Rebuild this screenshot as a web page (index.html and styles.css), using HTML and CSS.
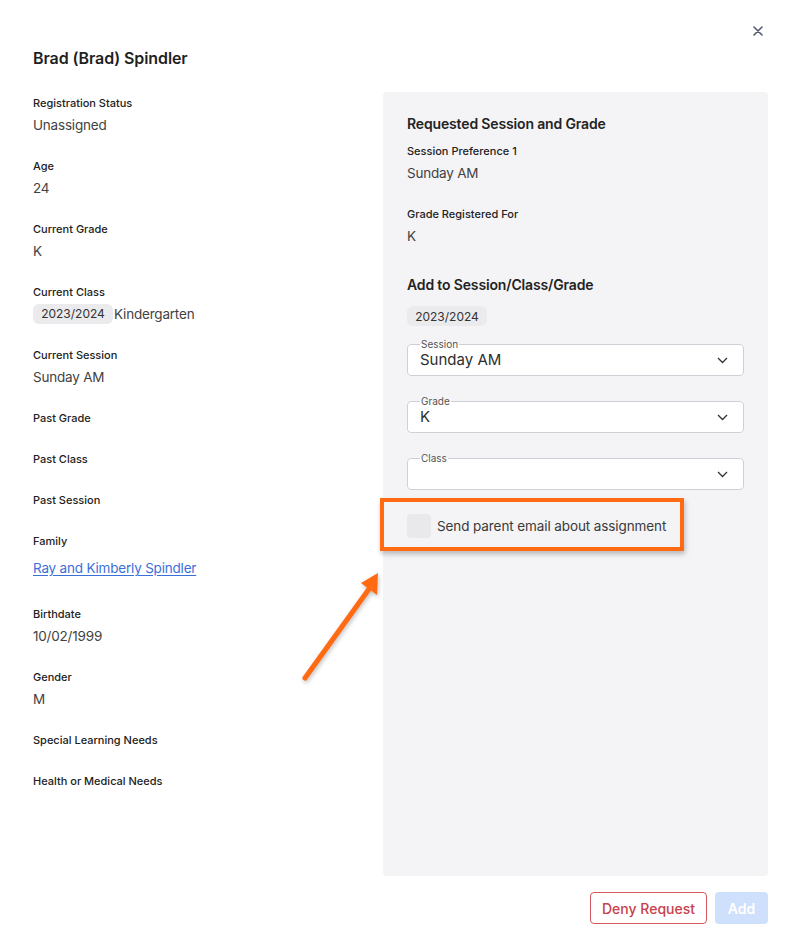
FILE: index.html
```html
<!DOCTYPE html>
<html lang="en">
<head>
    <meta charset="UTF-8">
    <meta name="viewport" content="width=device-width, initial-scale=1.0">
    <title>Brad (Brad) Spindler</title>
    <link rel="stylesheet" href="styles.css">
</head>
<body>
    <div class="modal">
        <div class="modal-header">
            <h1>Brad (Brad) Spindler</h1>
            <button class="close-btn" aria-label="Close">
                <svg width="10" height="10" viewBox="0 0 10 10"><path d="M1 1L9 9M9 1L1 9" stroke="#4f5a6b" stroke-width="1.6" stroke-linecap="round"/></svg>
            </button>
        </div>

        <div class="modal-body">
            <div class="details">
                <div class="field">
                    <div class="label">Registration Status</div>
                    <div class="value">Unassigned</div>
                </div>
                <div class="field">
                    <div class="label">Age</div>
                    <div class="value">24</div>
                </div>
                <div class="field">
                    <div class="label">Current Grade</div>
                    <div class="value">K</div>
                </div>
                <div class="field">
                    <div class="label">Current Class</div>
                    <div class="value value-chip"><span class="chip">2023/2024</span>Kindergarten</div>
                </div>
                <div class="field">
                    <div class="label">Current Session</div>
                    <div class="value">Sunday AM</div>
                </div>
                <div class="field">
                    <div class="label">Past Grade</div>
                </div>
                <div class="field">
                    <div class="label">Past Class</div>
                </div>
                <div class="field">
                    <div class="label">Past Session</div>
                </div>
                <div class="field field-link">
                    <div class="label">Family</div>
                    <a href="#" class="value link">Ray and Kimberly Spindler</a>
                </div>
                <div class="field">
                    <div class="label">Birthdate</div>
                    <div class="value">10/02/1999</div>
                </div>
                <div class="field">
                    <div class="label">Gender</div>
                    <div class="value">M</div>
                </div>
                <div class="field">
                    <div class="label">Special Learning Needs</div>
                </div>
                <div class="field">
                    <div class="label">Health or Medical Needs</div>
                </div>
            </div>

            <div class="panel">
                <h2>Requested Session and Grade</h2>
                <div class="field">
                    <div class="label">Session Preference 1</div>
                    <div class="value">Sunday AM</div>
                </div>
                <div class="field">
                    <div class="label">Grade Registered For</div>
                    <div class="value">K</div>
                </div>

                <h2 class="add-title">Add to Session/Class/Grade</h2>
                <span class="chip chip-year">2023/2024</span>

                <fieldset class="select">
                    <legend>Session</legend>
                    <div class="select-row">
                        <span class="select-value">Sunday AM</span>
                        <svg class="chevron" width="11" height="7" viewBox="0 0 11 7"><path d="M1 1l4.5 4.5L10 1" fill="none" stroke="#333" stroke-width="1.3"/></svg>
                    </div>
                </fieldset>
                <fieldset class="select">
                    <legend>Grade</legend>
                    <div class="select-row">
                        <span class="select-value">K</span>
                        <svg class="chevron" width="11" height="7" viewBox="0 0 11 7"><path d="M1 1l4.5 4.5L10 1" fill="none" stroke="#333" stroke-width="1.3"/></svg>
                    </div>
                </fieldset>
                <fieldset class="select">
                    <legend>Class</legend>
                    <div class="select-row">
                        <span class="select-value"></span>
                        <svg class="chevron" width="11" height="7" viewBox="0 0 11 7"><path d="M1 1l4.5 4.5L10 1" fill="none" stroke="#333" stroke-width="1.3"/></svg>
                    </div>
                </fieldset>

                <label class="checkbox">
                    <span class="box"></span>
                    Send parent email about assignment
                </label>
            </div>
        </div>

        <div class="modal-footer">
            <button class="btn btn-deny">Deny Request</button>
            <button class="btn btn-add" disabled>Add</button>
        </div>
    </div>

    <!-- annotation over the screenshot -->
    <div class="highlight"></div>
    <svg class="arrow" width="100" height="130" viewBox="0 0 100 130">
        <path d="M8 113L72 24" stroke="#ff6a13" stroke-width="5" stroke-linecap="round"/>
        <path d="M81 8L64 18L80 30Z" fill="#ff6a13"/>
    </svg>
</body>
</html>
```

FILE: styles.css
```css
* {
    margin: 0;
    padding: 0;
    box-sizing: border-box;
}

body {
    font-family: Inter, 'Noto Sans', sans-serif;
    background: #fff;
    color: #262626;
    position: relative;
}

.modal {
    width: 788px;
    padding: 0 20px 0 33px;
}

.modal-header {
    display: flex;
    justify-content: space-between;
    align-items: flex-start;
    height: 68px;
    margin-bottom: 24px;
}

h1 {
    font-size: 16px;
    line-height: 20px;
    font-weight: 600;
    letter-spacing: -0.1px;
    padding-top: 48px;
    color: #1f1f1f;
}

.close-btn {
    background: none;
    border: none;
    margin-top: 26px;
    margin-right: 5px;
    width: 10px;
    height: 10px;
    display: flex;
    cursor: pointer;
}

.modal-body {
    display: grid;
    grid-template-columns: 350px 1fr;
}

.details {
    padding-top: 3px;
}

.field {
    margin-bottom: 25px;
}

.label {
    font-size: 11px;
    line-height: 16px;
    font-weight: 500;
    color: #222;
}

.value {
    display: block;
    margin-top: 6px;
    font-size: 13.5px;
    letter-spacing: -0.2px;
    line-height: 16px;
    color: #424242;
}

.value-chip {
    display: flex;
    align-items: center;
    height: 16px;
}

.chip {
    display: inline-flex;
    align-items: center;
    justify-content: center;
    width: 80px;
    height: 20px;
    border-radius: 6px;
    background: #ebebee;
    font-size: 12px;
    letter-spacing: 0;
    color: #333;
    margin-right: 1px;
    flex-shrink: 0;
}

.field-link {
    margin-bottom: 30px;
}

.link {
    margin-top: 11px;
    color: #3b6fd8;
    text-decoration: underline;
    text-underline-offset: 2px;
}

.panel {
    background: #f4f4f6;
    border-radius: 4px;
    min-height: 784px;
    padding: 22px 24px 24px;
}

h2 {
    font-size: 14px;
    line-height: 20px;
    font-weight: 600;
    letter-spacing: -0.15px;
    color: #232323;
    margin-bottom: 9px;
}

.add-title {
    margin-top: 31px;
    margin-bottom: 11px;
}

.chip-year {
    display: flex;
}

.select {
    margin-top: 12px;
    border: 1px solid #cfd0d6;
    border-radius: 4px;
    background: #fff;
    padding: 0 15px 7px 12px;
    min-width: 0;
}

.select + .select {
    margin-top: 19px;
}

.select legend {
    font-size: 10px;
    line-height: 12px;
    color: #555;
    padding: 0 1px;
}

.select-row {
    display: flex;
    justify-content: space-between;
    align-items: center;
    height: 18px;
}

.select-value {
    font-size: 15px;
    color: #2e2e2e;
}

.chevron {
    margin-top: 2px;
}

.checkbox {
    display: flex;
    align-items: center;
    gap: 6px;
    margin-top: 24px;
    font-size: 13.5px;
    letter-spacing: -0.1px;
    color: #3a3a3a;
}

.box {
    width: 24px;
    height: 24px;
    border-radius: 4px;
    background: #e9e9ec;
}

.modal-footer {
    display: flex;
    justify-content: flex-end;
    gap: 8px;
    margin-top: 16px;
}

.btn {
    height: 32px;
    border-radius: 4px;
    font-family: Inter, 'Noto Sans', sans-serif;
    font-size: 14px;
    font-weight: 500;
    cursor: pointer;
}

.btn-deny {
    width: 117px;
    background: #fff;
    border: 1px solid #d5575b;
    color: #c8414b;
}

.btn-add {
    width: 53px;
    background: #cfe0fc;
    border: none;
    color: #fff;
    font-weight: 600;
}

.highlight {
    position: absolute;
    left: 380px;
    top: 498px;
    width: 304px;
    height: 53px;
    border: 4px solid #ff6a13;
    box-shadow: 1px 3px 5px rgba(0, 0, 0, 0.25);
}

.arrow {
    position: absolute;
    left: 297px;
    top: 565px;
    filter: drop-shadow(1px 2px 2px rgba(0, 0, 0, 0.25));
}
```
